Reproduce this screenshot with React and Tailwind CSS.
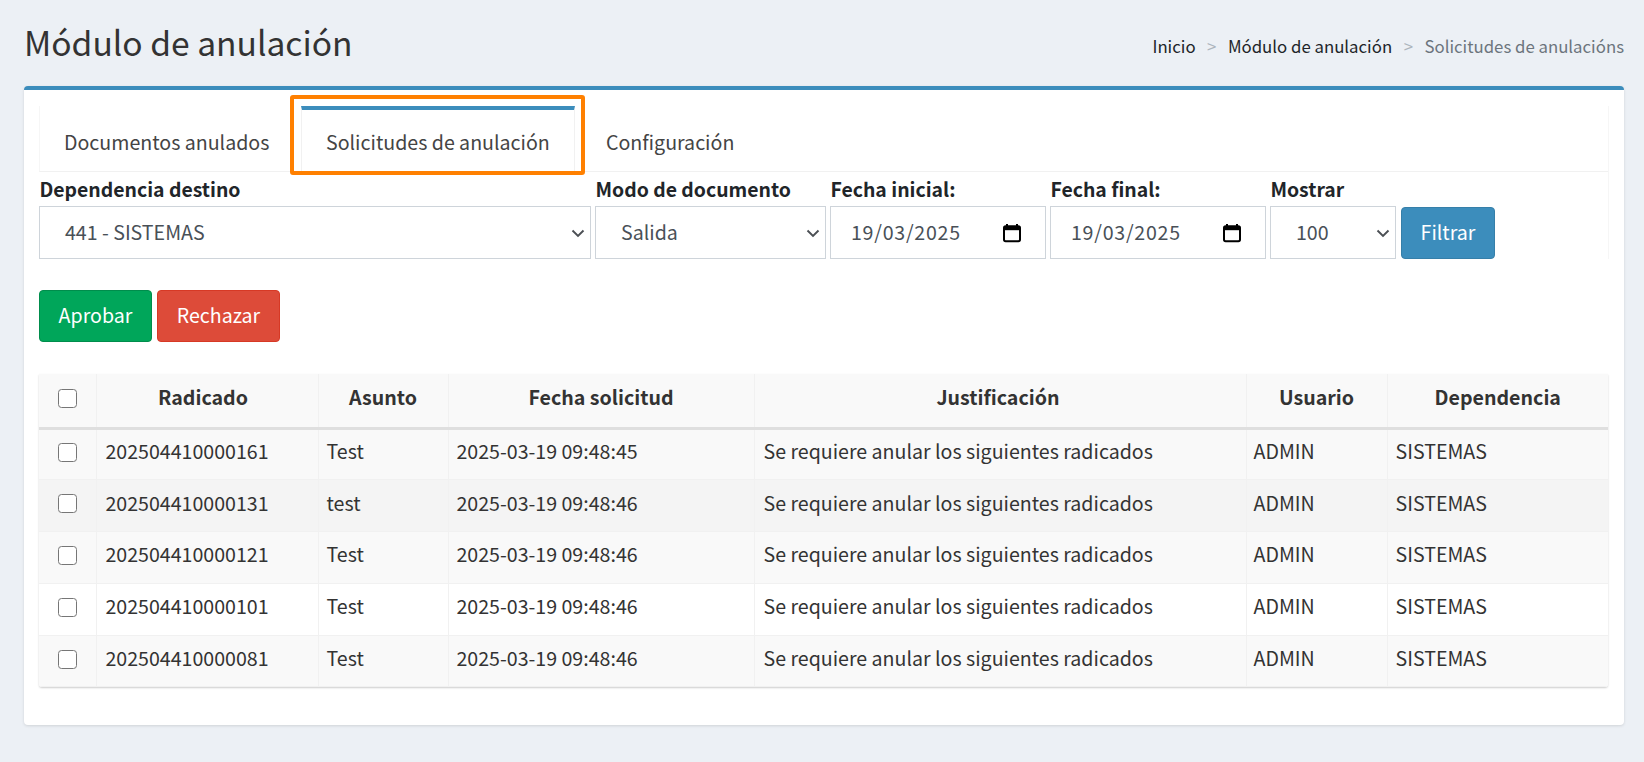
import React from "react";

const FONT = "font-['Noto_Sans_CJK_JP','Noto_Sans',sans-serif]";
const rows = [
  ["202504410000161", "Test", "2025-03-19 09:48:45", "bg-[#f9f9f9]"],
  ["202504410000131", "test", "2025-03-19 09:48:46", "bg-[#f4f4f4]"],
  ["202504410000121", "Test", "2025-03-19 09:48:46", "bg-[#f9f9f9]"],
  ["202504410000101", "Test", "2025-03-19 09:48:46", "bg-white"],
  ["202504410000081", "Test", "2025-03-19 09:48:46", "bg-[#f9f9f9]"],
];

function Chevron() {
  return (
    <svg width="14" height="9" viewBox="0 0 14 9" fill="none" className="absolute right-[5px] top-[22px]">
      <path d="M1.5 1.5 7 7l5.5-5.5" stroke="#4b4f54" strokeWidth="1.9" />
    </svg>
  );
}

function Sel({ w, value }) {
  return (
    <div className={`relative ${w} h-[53px] bg-white border border-[#ced4da] flex items-center pl-[25px] pb-[2px] text-[#495057]`}>
      {value}
      <Chevron />
    </div>
  );
}

function DateBox({ value }) {
  return (
    <div className="relative w-[216px] h-[53px] bg-white border border-[#ced4da] flex items-center pl-[20px] pb-[2px] text-[#495057] tracking-[0.75px]">
      {value}
      <svg width="20" height="20" viewBox="0 0 20 20" className="absolute left-[171px] top-[16px]">
        <path d="M5 1v3M15 1v3" stroke="#000" strokeWidth="2" />
        <rect x="2" y="3.2" width="16" height="15" rx="1.6" fill="none" stroke="#000" strokeWidth="2" />
        <rect x="2" y="3.2" width="16" height="4" fill="#000" />
      </svg>
    </div>
  );
}

function Field({ label, children, className = "" }) {
  return (
    <div className={`flex flex-col ${className}`}>
      <label className="h-[35px] pl-[0.5px] pt-[2px] text-[19.4px] font-bold leading-[32px] text-[#212529]">{label}</label>
      {children}
    </div>
  );
}

function Check() {
  return <input type="checkbox" className="block appearance-none mx-auto w-[19px] h-[19px] bg-white border-[1.5px] border-[#767676] rounded-[3.5px]" />;
}

const cols = [57, 222, 130, 306, 492, 141, 221];
const heads = [
  ["Radicado", "pr-[8px]"],
  ["Asunto", ""],
  ["Fecha solicitud", ""],
  ["Justificación", "pr-[4px]"],
  ["Usuario", ""],
  ["Dependencia", ""],
];

export default function App() {
  return (
    <div className={`${FONT} w-[1644px] h-[762px] overflow-hidden bg-[#ecf0f5] text-[#212529] text-[19.6px] leading-[28px]`}>
      <div className="flex items-start justify-between h-[86px] pl-[24px] pr-[20px]">
        <h1 className="text-[33.6px] leading-[50px] pt-[17px] text-[#333] font-normal">Módulo de anulación</h1>
        <nav className="flex items-center pt-[32px] text-[16.8px] leading-[28px] text-[#212529]">
          <span>Inicio</span>
          <span className="mx-[11.5px] text-[#adb5bd]">&gt;</span>
          <span>Módulo de anulación</span>
          <span className="mx-[11.5px] text-[#adb5bd]">&gt;</span>
          <span className="text-[#6c757d]">Solicitudes de anulacións</span>
        </nav>
      </div>

      <main className="relative ml-[24px] w-[1600px] h-[639px] bg-white rounded-[4px] border-t-[4px] border-[#3c8dbc] shadow-[0_1px_3px_rgba(0,0,0,0.12)] pt-[16px] pl-[15px] pr-[15px]">
        <div className="flex h-[66px] border-x border-[#f6f6f6] border-b border-b-[#f1f1f1] -mb-px items-stretch">
          <div className="w-[261px] pl-[24px] pt-[22px] text-[#444]">Documentos anulados</div>
          <div className="w-[274px] pl-[24px] pt-[18px] border-t-[4px] border-[#3c8dbc] border-x border-x-[#f1f1f1] text-[#444]">
            Solicitudes de anulación
          </div>
          <div className="pl-[31px] pt-[22px] text-[#444]">Configuración</div>
        </div>

        <div className="flex border-r border-[#f6f6f6]">
          <Field label="Dependencia destino"><Sel w="w-[552px]" value="441 - SISTEMAS" /></Field>
          <Field label="Modo de documento" className="ml-[4px]"><Sel w="w-[231px]" value="Salida" /></Field>
          <Field label="Fecha inicial:" className="ml-[4px]"><DateBox value="19/03/2025" /></Field>
          <Field label="Fecha final:" className="ml-[4px]"><DateBox value="19/03/2025" /></Field>
          <Field label="Mostrar" className="ml-[4px]"><Sel w="w-[126px]" value="100" /></Field>
          <button className="ml-[5px] mt-[36px] w-[94px] h-[52px] bg-[#3c8dbc] border border-[#367fa9] rounded-[4px] pb-[2px] text-white">Filtrar</button>
        </div>

        <div className="flex gap-[5px] mt-[31px]">
          <button className="w-[113px] h-[52px] bg-[#00a65a] border border-[#008d4c] rounded-[4px] pb-[2px] text-white">Aprobar</button>
          <button className="w-[123px] h-[52px] bg-[#dd4b39] border border-[#d73925] rounded-[4px] pb-[2px] text-white">Rechazar</button>
        </div>

        <div className="mt-[32px] shadow-[0_1px_2px_rgba(0,0,0,0.2)] rounded-b-[3px] overflow-hidden w-[1569px]">
          <table className="w-[1569px] table-fixed border-collapse text-[#333]">
            <colgroup>
              {cols.map((c, i) => <col key={i} style={{ width: c }} />)}
            </colgroup>
            <thead>
              <tr className="h-[54px] bg-[#f9f9f9] border-b-[3px] border-[#dfdfdf]">
                <th className="pb-[4px] border-r border-[#f1f1f1]"><Check /></th>
                {heads.map(([h, extra], i) => (
                  <th key={h} className={`pb-[6px] font-bold text-center ${extra} ${i < 5 ? "border-r border-[#f1f1f1]" : ""}`}>{h}</th>
                ))}
              </tr>
            </thead>
            <tbody>
              {rows.map((r) => (
                <tr key={r[0]} className={`h-[51.8px] ${r[3]} border-b border-[#f1f1f1]`}>
                  <td className="pb-[4px] border-r border-[#f1f1f1]"><Check /></td>
                  <td className="pb-[6px] pl-[9px] border-r border-[#f1f1f1]">{r[0]}</td>
                  <td className="pb-[6px] pl-[8px] border-r border-[#f1f1f1]">{r[1]}</td>
                  <td className="pb-[6px] pl-[8px] border-r border-[#f1f1f1]">{r[2]}</td>
                  <td className="pb-[6px] pl-[9px] border-r border-[#f1f1f1]">Se requiere anular los siguientes radicados</td>
                  <td className="pb-[6px] pl-[7px] border-r border-[#f1f1f1]">ADMIN</td>
                  <td className="pb-[6px] pl-[8px]">SISTEMAS</td>
                </tr>
              ))}
            </tbody>
          </table>
        </div>

        <div className="absolute left-[266px] top-[5px] w-[295px] h-[80px] border-[4px] border-[#ff8000] rounded-[3px] pointer-events-none" />
      </main>
    </div>
  );
}
